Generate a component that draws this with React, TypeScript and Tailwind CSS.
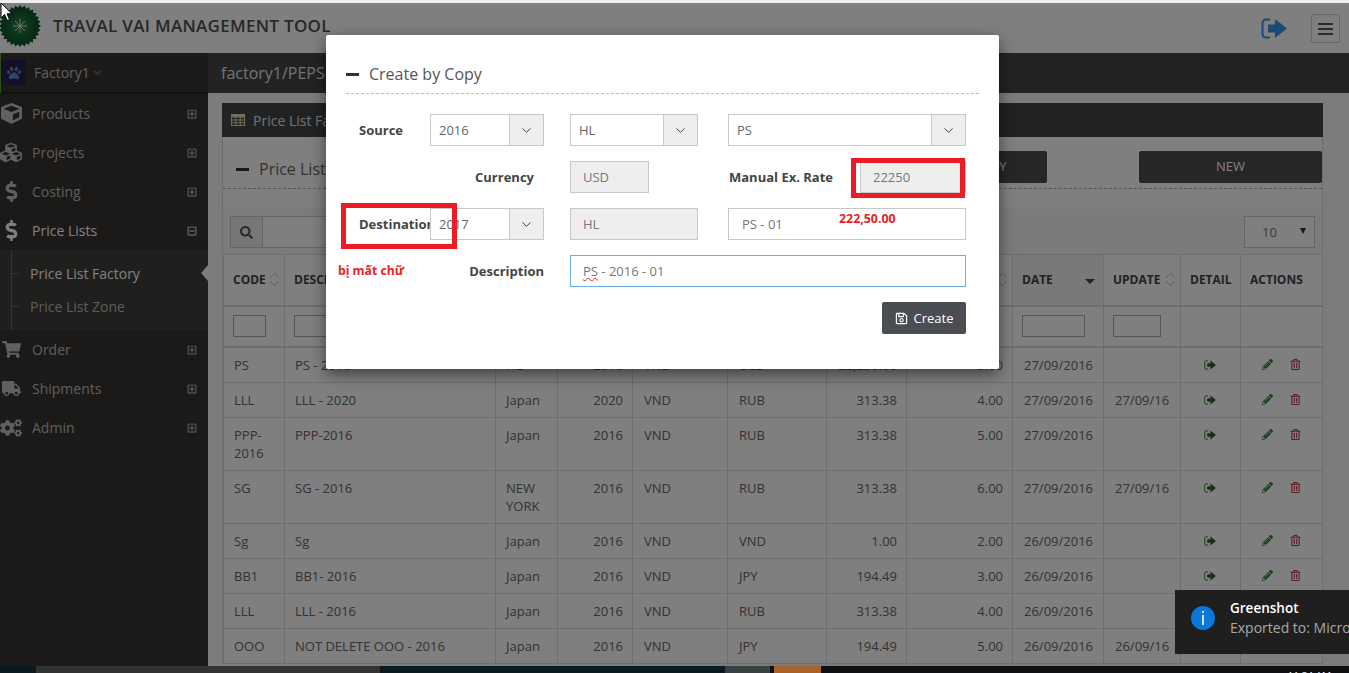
import React from "react";
import { FaCube, FaCubes, FaDollarSign, FaShoppingCart, FaTruck, FaCogs, FaRegPlusSquare, FaRegMinusSquare, FaSearch, FaRegSave, FaPencilAlt, FaRegTrashAlt, FaPaw } from "react-icons/fa";
import { ChevronDown } from "lucide-react";

const logoPoints = Array.from({ length: 56 }, (_, i) => {
  const a = (i * Math.PI) / 28;
  const r = i % 2 === 0 ? 21 : 18.4;
  return `${(21 + r * Math.cos(a)).toFixed(2)},${(21 + r * Math.sin(a)).toFixed(2)}`;
}).join(" ");

function Logo() {
  return (
    <svg width="42" height="42" viewBox="0 0 42 42" className="shrink-0">
      <defs>
        <radialGradient id="lg" cx="50%" cy="50%" r="50%">
          <stop offset="0%" stopColor="#3a8a55" />
          <stop offset="55%" stopColor="#12652f" />
          <stop offset="100%" stopColor="#0b4a1f" />
        </radialGradient>
      </defs>
      <polygon points={logoPoints} fill="url(#lg)" />
      <g stroke="#f4f4f4" strokeWidth="0.8">
        <line x1="21" y1="14" x2="21" y2="28" />
        <line x1="14" y1="21" x2="28" y2="21" />
        <line x1="16" y1="16" x2="26" y2="26" />
        <line x1="26" y1="16" x2="16" y2="26" />
      </g>
    </svg>
  );
}

function SignOut({ className }: { className?: string }) {
  return (
    <svg viewBox="0 0 26 21" className={className} fill="none">
      <path d="M9 1.5H5a3.5 3.5 0 0 0-3.5 3.5v11A3.5 3.5 0 0 0 5 19.5h4" stroke="currentColor" strokeWidth="2" />
      <polygon points="7,6.5 14,6.5 14,1 26,10.5 14,20 14,14.5 7,14.5" fill="currentColor" />
    </svg>
  );
}

function Sort() {
  return (
    <svg width="11" height="15" viewBox="0 0 11 15" fill="none" stroke="#bdbdbd" strokeWidth="1" className="shrink-0">
      <path d="M1 6 5.5 1 10 6" />
      <path d="M1 9l4.5 5L10 9" />
    </svg>
  );
}

function TableIcon() {
  return (
    <svg width="14" height="12" viewBox="0 0 14 12" className="mr-[8px] shrink-0" fill="none" stroke="#e8dcae" strokeWidth="1">
      <rect x="0.5" y="0.5" width="13" height="11" />
      <rect x="0.5" y="0.5" width="13" height="2.5" fill="#e8dcae" />
      <path d="M0.5 6h13M0.5 8.8h13M4.8 3v8.5M9.2 3v8.5" />
    </svg>
  );
}

function MenuItem({ icon, label, active, minus }: { icon: React.ReactNode; label: string; active?: boolean; minus?: boolean }) {
  return (
    <div className={`h-[39px] flex items-center pr-[11px] text-[14px] ${active ? "text-white" : "text-[#bdbdbd]"}`}>
      <span className={`w-[32px] flex justify-center pr-[10px] text-[21px] ${active ? "text-white" : "text-[#c0c0c0]"}`}>{icon}</span>
      <span className="flex-1">{label}</span>
      {minus ? <FaRegMinusSquare className="text-[10px] text-white" /> : <FaRegPlusSquare className="text-[10px] text-[#c8c8c8]" />}
    </div>
  );
}

function Sidebar() {
  return (
    <aside className="w-[208px] shrink-0 bg-[#363533]">
      <div className="h-[41px] flex items-center border-b-2 border-b-[#222] border-l-[1px] border-l-[#5a9a30]">
        <div className="w-[25px] h-[25px] bg-[#24224a] flex items-center justify-center">
          <FaPaw className="text-[14px] text-[#5f88cc]" />
        </div>
        <span className="ml-[8px] text-[14px] text-[#bdbdbd]">Factory1</span>
        <ChevronDown strokeWidth={1.6} className="w-[13px] h-[13px] ml-[1px] text-[#bdbdbd]" />
      </div>
      <MenuItem icon={<FaCube />} label="Products" />
      <MenuItem icon={<FaCubes className="text-[23px]" />} label="Projects" />
      <MenuItem icon={<FaDollarSign />} label="Costing" />
      <MenuItem icon={<FaDollarSign />} label="Price Lists" active minus />
      <div className="relative h-[80px] bg-[#3f3e3c] text-[14px]">
        <div className="absolute left-[11px] top-0 bottom-0 w-px bg-[#6a6a6a]" />
        <div className="h-[47px] flex items-center pl-[11px]">
          <span className="w-[8px] h-px bg-[#6a6a6a] mr-[11px]" />
          <span className="text-white">Price List Factory</span>
        </div>
        <div className="h-[18px] flex items-center pl-[11px]">
          <span className="w-[8px] h-px bg-[#6a6a6a] mr-[11px]" />
          <span className="text-[#b8b8b8]">Price List Zone</span>
        </div>
        <div className="absolute right-0 top-[15px] w-0 h-0 border-y-[8px] border-y-transparent border-r-[7px] border-r-[#f8f8f8]" />
      </div>
      <MenuItem icon={<FaShoppingCart className="text-[19px]" />} label="Order" />
      <MenuItem icon={<FaTruck className="text-[19px]" />} label="Shipments" />
      <MenuItem icon={<FaCogs className="text-[22px]" />} label="Admin" />
    </aside>
  );
}

const rows = [
  ["PS", "PS - 2016", "HL", "2016", "VND", "USD", "22,250.00", "3.00", "27/09/2016", ""],
  ["LLL", "LLL - 2020", "Japan", "2020", "VND", "RUB", "313.38", "4.00", "27/09/2016", "27/09/16"],
  ["PPP-2016", "PPP-2016", "Japan", "2016", "VND", "RUB", "313.38", "5.00", "27/09/2016", ""],
  ["SG", "SG - 2016", "NEW YORK", "2016", "VND", "RUB", "313.38", "6.00", "27/09/2016", "27/09/16"],
  ["Sg", "Sg", "Japan", "2016", "VND", "VND", "1.00", "2.00", "26/09/2016", ""],
  ["BB1", "BB1- 2016", "Japan", "2016", "VND", "JPY", "194.49", "3.00", "26/09/2016", ""],
  ["LLL", "LLL - 2016", "Japan", "2016", "VND", "RUB", "313.38", "4.00", "26/09/2016", ""],
  ["OOO", "NOT DELETE OOO - 2016", "Japan", "2016", "VND", "JPY", "194.49", "5.00", "26/09/2016", "26/09/16"],
];

const widths = [61, 211, 62, 75, 95, 99, 80, 106, 91, 77, 60, 82];
const headers: [string, boolean][] = [
  ["CODE", true], ["DESCRIPTION", true], ["ZONE", true], ["YEAR", true], ["CURRENCY", true], ["EX. CURRENCY", true],
  ["EX. RATE", true], ["MANUAL", true], ["DATE", false], ["UPDATE", true], ["DETAIL", false], ["ACTIONS", false],
];

function DataTable() {
  return (
    <table className="table-fixed border-collapse w-[1099px] text-[13px] leading-[18px] text-[#666] border border-[#ddd]">
      <colgroup>
        {widths.map((w, i) => <col key={i} style={{ width: w }} />)}
      </colgroup>
      <thead>
        <tr className="h-[51px] border-b-2 border-b-[#ddd]">
          {headers.map(([h, s], i) => (
            <th key={i} className={`border-x border-[#ddd] pl-[9px] pr-[4px] text-left font-bold text-[12px] text-[#444] ${h === "DATE" ? "bg-[#f2f2f2]" : ""}`}>
              <div className="flex items-center justify-between overflow-hidden whitespace-nowrap">
                <span>{h}</span>
                {s && <Sort />}
                {h === "DATE" && <span className="mr-[4px] mt-[3px] w-0 h-0 border-x-[5px] border-x-transparent border-t-[5px] border-t-[#444]" />}
              </div>
            </th>
          ))}
        </tr>
        <tr className="h-[41px] border-b-2 border-b-[#ddd]">
          {widths.map((w, i) => (
            <th key={i} className="border-x border-[#ddd] pl-[9px] font-normal">
              {i < 10 && <div className={`h-[22px] border border-[#aaa] bg-white ${i === 8 ? "w-[63px]" : i === 9 ? "w-[48px]" : i === 0 ? "w-[33px]" : "w-[48px]"}`} />}
            </th>
          ))}
        </tr>
      </thead>
      <tbody>
        {rows.map((r, i) => (
          <tr key={i} className="border-b border-[#ddd]">
            {r.map((c, j) => (
              <td key={j} className={`border-x border-[#ddd] py-[8px] align-top ${j === 3 || j === 6 || j === 7 ? "text-right pr-[9px] pl-[6px]" : j < 3 ? "pl-[10px] pr-[6px]" : "pl-[11px] pr-[6px]"}`}>{c}</td>
            ))}
            <td className="border-x border-[#ddd] align-top pt-[11px]">
              <div className="flex justify-center pr-[1px]"><SignOut className="w-[12px] h-[10px] mt-px text-[#2f622f]" /></div>
            </td>
            <td className="border-x border-[#ddd] align-top pt-[11px]">
              <div className="flex justify-center gap-[17px]">
                <FaPencilAlt className="text-[11px] text-[#3f7f3f]" />
                <FaRegTrashAlt className="text-[11px] text-[#c02838]" />
              </div>
            </td>
          </tr>
        ))}
      </tbody>
    </table>
  );
}

function Main() {
  return (
    <main className="flex-1 min-w-0 bg-[#f8f8f8]">
      <div className="h-[40px] bg-[#464646] flex items-center pl-[13px] text-[16px] text-[#dfe6ec]">factory1/PEPSI</div>
      <div className="mt-[10px] ml-[14px] w-[1101px] bg-white border-x border-[#ddd]">
        <div className="h-[34px] -mx-px bg-[#444] flex items-center pl-[9px] text-[14px] text-[#dfe6ec]">
          <TableIcon />
          <span>Price List Factory</span>
        </div>
        <div className="h-[72px] relative flex items-start pt-[14px]">
          <div className="flex items-center h-[32px] mt-[2px] pl-[13px] flex-1">
            <span className="w-[13px] h-[3px] bg-[#333] mr-[10px]" />
            <span className="text-[16px] text-[#666]">Price List Factory</span>
          </div>
          <button className="w-[183px] h-[32px] rounded-[2px] bg-[#4a4c50] text-white text-[13px]">CREATE BY COPY</button>
          <button className="w-[183px] h-[32px] ml-[92px] rounded-[2px] bg-[#4a4c50] text-white text-[13px]">NEW</button>
          <div className="absolute left-0 right-0 top-[51px] border-t border-dashed border-[#aaa]" />
        </div>
        <div className="h-[45px] bg-[#f6f6f6] pl-[7px] pr-[7px] flex items-center justify-between pb-[1px] pt-[2px]">
          <div className="flex h-[32px]">
            <div className="w-[33px] border border-[#ccc] bg-[#eee] flex items-center justify-center"><FaSearch className="text-[13px] text-[#555]" /></div>
            <div className="w-[400px] border-y border-r border-[#ccc] bg-white" />
          </div>
          <div className="w-[71px] h-[32px] border border-[#ccc] bg-white flex items-center justify-between pl-[17px] pr-[8px] text-[13px] text-[#777]">
            <span className="pt-[1px]">10</span>
            <span className="w-0 h-0 border-x-[3px] border-x-transparent border-t-[6px] border-t-[#333] -mt-[3px]" />
          </div>
        </div>
        <DataTable />
      </div>
    </main>
  );
}

function SelectBox({ value, className }: { value: string; className: string }) {
  return (
    <div className={`h-[32px] flex border border-[#c8c8c8] bg-white shrink-0 text-[13px] text-[#666] ${className}`}>
      <div className="flex-1 flex items-center pl-[8px] pt-[2px]">{value}</div>
      <div className="w-[34px] bg-[#eee] border-l border-[#c8c8c8] flex items-center justify-center">
        <ChevronDown strokeWidth={1.6} className="w-[15px] h-[15px] text-[#444]" />
      </div>
    </div>
  );
}

function Field({ value, className }: { value: React.ReactNode; className: string }) {
  return <div className={`h-[32px] flex items-center pl-[12px] pt-[1px] border shrink-0 text-[13px] text-[#777] ${className}`}>{value}</div>;
}

const labelCls = "font-bold text-[13px] shrink-0 pt-[1px]";

function Modal() {
  return (
    <div className="absolute z-20 left-[326px] top-[35px] w-[673px] h-[334px] bg-white rounded-[2px] shadow-[0_5px_15px_rgba(0,0,0,0.5)] px-[20px] pt-[25px] text-[#444]">
      <div className="flex items-center h-[27px]">
        <span className="w-[13px] h-[3px] bg-[#333] mr-[10px] mt-[1px]" />
        <span className="text-[16px] text-[#555]">Create by Copy</span>
      </div>
      <div className="mt-[6px] border-t border-dashed border-[#bbb]" />
      <div className="mt-[20px] flex items-center">
        <div className={`w-[84px] pl-[13px] ${labelCls}`}>Source</div>
        <SelectBox value="2016" className="w-[114px]" />
        <SelectBox value="HL" className="w-[128px] ml-[26px]" />
        <SelectBox value="PS" className="w-[238px] ml-[30px]" />
      </div>
      <div className="mt-[15px] flex items-center">
        <div className={`w-[188px] text-right ${labelCls}`}>Currency</div>
        <Field value="USD" className="w-[79px] ml-[36px] bg-[#eee] border-[#c8c8c8]" />
        <div className={`w-[131px] ml-[80px] ${labelCls}`}>Manual Ex. Rate</div>
        <Field value="22250" className="w-[106px] bg-[#eee] border-[#c8c8c8]" />
      </div>
      <div className="mt-[15px] flex items-center">
        <div className={`w-[84px] pl-[13px] whitespace-nowrap ${labelCls}`}>Destination</div>
        <SelectBox value="2017" className="w-[114px] relative z-10" />
        <Field value="HL" className="w-[128px] ml-[26px] bg-[#eee] border-[#c8c8c8]" />
        <Field value="PS - 01" className="w-[238px] ml-[30px] bg-white border-[#c8c8c8] pl-[13px]" />
      </div>
      <div className="mt-[15px] flex items-center">
        <div className={`w-[198px] text-right ${labelCls}`}>Description</div>
        <Field
          value={<><span className="underline decoration-wavy decoration-[#e02020] decoration-1">PS</span><span>&nbsp;- 2016 - 01</span></>}
          className="w-[396px] ml-[26px] bg-white border-[#66afe9]"
        />
      </div>
      <div className="mt-[15px] flex justify-end pr-[13px]">
        <button className="w-[84px] h-[32px] rounded-[2px] bg-[#4a4d52] text-white text-[13px] flex items-center justify-center gap-[6px]">
          <FaRegSave className="text-[13px]" />
          <span className="pt-[1px]">Create</span>
        </button>
      </div>
    </div>
  );
}

function Annotations() {
  return (
    <>
      <div className="absolute z-30 left-[341px] top-[203px] w-[116px] h-[46px] border-[5px] border-[#ed1c24]" />
      <div className="absolute z-30 left-[851px] top-[158px] w-[114px] h-[40px] border-[5px] border-[#ed1c24]" />
      <div className="absolute z-30 left-[338px] top-[263px] text-[12.2px] font-bold leading-[16px] text-[#ed1c24]">bị mất chữ</div>
      <div className="absolute z-30 left-[839px] top-[211px] text-[12.4px] font-bold leading-[16px] text-[#ed1c24]">222,50.00</div>
    </>
  );
}

function Toast() {
  return (
    <div className="absolute z-40 left-[1175px] right-0 top-[590px] h-[64px] bg-[#1f1f1f] flex items-start overflow-hidden whitespace-nowrap">
      <div className="ml-[16px] mt-[16px] w-[24px] h-[24px] rounded-full bg-[#0a78d7] flex items-center justify-center text-white shrink-0">
        <svg width="4" height="14" viewBox="0 0 4 14" fill="white"><rect x="1.2" y="0" width="1.6" height="2" /><rect x="1.2" y="4" width="1.6" height="10" /></svg>
      </div>
      <div className="ml-[15px] mt-[8px] text-[14px] leading-[20px]">
        <div className="text-white font-semibold text-[13.5px]">Greenshot</div>
        <div className="text-[#a8a8a8]">Exported to: Microsoft Paint</div>
      </div>
    </div>
  );
}

export default function App() {
  return (
    <div className="relative w-[1349px] h-[673px] overflow-hidden bg-white font-['Open_Sans',sans-serif] flex flex-col">
      <div className="h-[3px] shrink-0 bg-[#efefef]" />
      <div className="relative h-[663px] shrink-0 overflow-hidden flex flex-col bg-white">
        <header className="h-[50px] shrink-0 bg-white flex items-center justify-between">
          <div className="flex items-center mb-[4px] -ml-px">
            <Logo />
            <span className="ml-[12px] text-[17px] font-semibold tracking-[0.3px] text-[#505050]">TRAVAL VAI MANAGEMENT TOOL</span>
          </div>
          <div className="flex items-center mr-[9px] mt-[1px]">
            <SignOut className="w-[26px] h-[21px] text-[#3694f0]" />
            <div className="ml-[24px] w-[29px] h-[29px] border border-[#ccc] rounded-[2px] flex flex-col items-center justify-center gap-[3px]">
              <span className="w-[15px] h-[2px] bg-[#555]" />
              <span className="w-[15px] h-[2px] bg-[#555]" />
              <span className="w-[15px] h-[2px] bg-[#555]" />
            </div>
          </div>
        </header>
        <div className="flex flex-1 min-h-0">
          <Sidebar />
          <Main />
        </div>
        <div className="absolute inset-0 z-10 bg-black/50" />
      </div>
      <div className="flex-1 flex bg-[#0e1114] overflow-hidden">
        <div className="w-[36px] bg-[#0a1a20]" />
        <div className="w-[344px] bg-[#333]" />
        <div className="w-[345px] bg-[#0a1a22]" />
        <div className="w-[45px] bg-[#3a3f42]" />
        <div className="w-[4px] bg-[#111]" />
        <div className="w-[47px] bg-[#a8622a]" />
        <div className="flex-1 flex justify-end pr-[18px] pt-[4px]">
          <span className="text-[10px] leading-[12px] text-white">11:34 AM</span>
        </div>
      </div>
      <Modal />
      <Annotations />
      <Toast />
      <svg width="14" height="20" viewBox="0 0 14 20" className="absolute z-50 left-[0px] top-[2px]">
        <path d="M1 1v15l3.6-3.4 2.6 6 2.4-1-2.6-5.8H12z" fill="white" stroke="black" strokeWidth="1" />
      </svg>
    </div>
  );
}
